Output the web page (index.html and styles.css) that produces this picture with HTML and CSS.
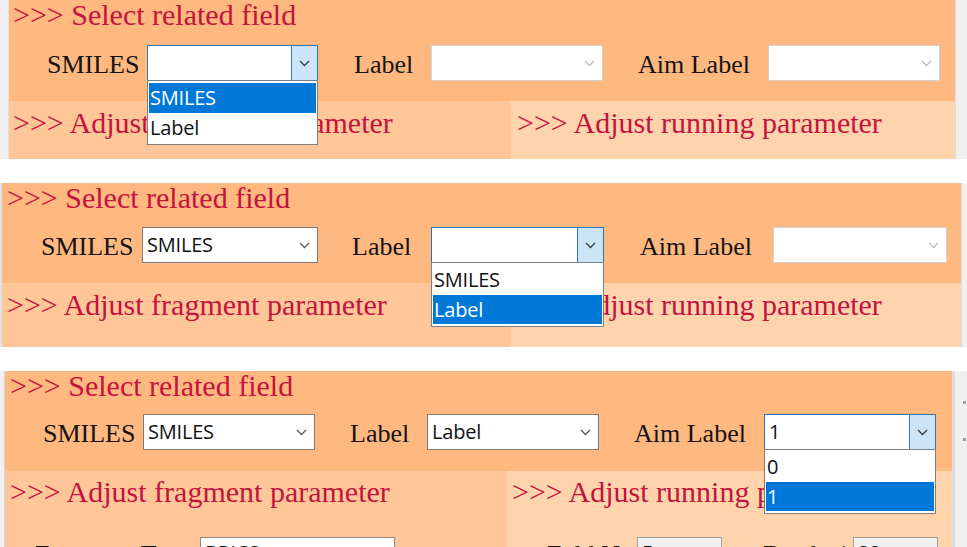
FILE: index.html
```html
<!DOCTYPE html>
<html lang="en">
<head>
<meta charset="utf-8">
<title>Select related field</title>
<link rel="stylesheet" href="styles.css">
</head>
<body>
<div class="shots">

  <!-- Shot 1: SMILES dropdown open -->
  <section class="shot shot-1">
    <div class="edge edge-left"></div>
    <div class="app">
      <div class="select-area">
        <h2 class="title">&gt;&gt;&gt; Select related field</h2>
        <div class="fields">
          <div class="field f1">
            <span class="field-label">SMILES</span>
            <div class="combo is-open">
              <span class="combo-value"></span>
              <span class="combo-btn"><svg viewBox="0 0 11 7" width="11" height="7"><path d="M1 1 L5.5 5.5 L10 1"/></svg></span>
              <ul class="listbox">
                <li class="is-active">SMILES</li>
                <li>Label</li>
              </ul>
            </div>
          </div>
          <div class="field f2">
            <span class="field-label">Label</span>
            <div class="combo is-disabled">
              <span class="combo-value"></span>
              <span class="combo-btn"><svg viewBox="0 0 11 7" width="11" height="7"><path d="M1 1 L5.5 5.5 L10 1"/></svg></span>
            </div>
          </div>
          <div class="field f3">
            <span class="field-label">Aim Label</span>
            <div class="combo is-disabled">
              <span class="combo-value"></span>
              <span class="combo-btn"><svg viewBox="0 0 11 7" width="11" height="7"><path d="M1 1 L5.5 5.5 L10 1"/></svg></span>
            </div>
          </div>
        </div>
      </div>
      <div class="param-area">
        <div class="param-col param-fragment"><h2 class="title">&gt;&gt;&gt; Adjust fragment parameter</h2></div>
        <div class="param-col param-running"><h2 class="title">&gt;&gt;&gt; Adjust running parameter</h2></div>
      </div>
    </div>
    <div class="edge edge-right"></div>
  </section>

  <!-- Shot 2: Label dropdown open -->
  <section class="shot shot-2">
    <div class="edge edge-left"></div>
    <div class="app">
      <div class="select-area">
        <h2 class="title">&gt;&gt;&gt; Select related field</h2>
        <div class="fields">
          <div class="field f1">
            <span class="field-label">SMILES</span>
            <div class="combo">
              <span class="combo-value">SMILES</span>
              <span class="combo-btn"><svg viewBox="0 0 11 7" width="11" height="7"><path d="M1 1 L5.5 5.5 L10 1"/></svg></span>
            </div>
          </div>
          <div class="field f2">
            <span class="field-label">Label</span>
            <div class="combo is-open">
              <span class="combo-value"></span>
              <span class="combo-btn"><svg viewBox="0 0 11 7" width="11" height="7"><path d="M1 1 L5.5 5.5 L10 1"/></svg></span>
              <ul class="listbox">
                <li>SMILES</li>
                <li class="is-active">Label</li>
              </ul>
            </div>
          </div>
          <div class="field f3">
            <span class="field-label">Aim Label</span>
            <div class="combo is-disabled">
              <span class="combo-value"></span>
              <span class="combo-btn"><svg viewBox="0 0 11 7" width="11" height="7"><path d="M1 1 L5.5 5.5 L10 1"/></svg></span>
            </div>
          </div>
        </div>
      </div>
      <div class="param-area">
        <div class="param-col param-fragment"><h2 class="title">&gt;&gt;&gt; Adjust fragment parameter</h2></div>
        <div class="param-col param-running"><h2 class="title">&gt;&gt;&gt; Adjust running parameter</h2></div>
      </div>
    </div>
    <div class="edge edge-right"></div>
  </section>

  <!-- Shot 3: Aim Label dropdown open -->
  <section class="shot shot-3">
    <div class="edge edge-left"></div>
    <div class="app">
      <div class="select-area">
        <h2 class="title">&gt;&gt;&gt; Select related field</h2>
        <div class="fields">
          <div class="field f1">
            <span class="field-label">SMILES</span>
            <div class="combo">
              <span class="combo-value">SMILES</span>
              <span class="combo-btn"><svg viewBox="0 0 11 7" width="11" height="7"><path d="M1 1 L5.5 5.5 L10 1"/></svg></span>
            </div>
          </div>
          <div class="field f2">
            <span class="field-label">Label</span>
            <div class="combo">
              <span class="combo-value">Label</span>
              <span class="combo-btn"><svg viewBox="0 0 11 7" width="11" height="7"><path d="M1 1 L5.5 5.5 L10 1"/></svg></span>
            </div>
          </div>
          <div class="field f3">
            <span class="field-label">Aim Label</span>
            <div class="combo is-open">
              <span class="combo-value">1</span>
              <span class="combo-btn"><svg viewBox="0 0 11 7" width="11" height="7"><path d="M1 1 L5.5 5.5 L10 1"/></svg></span>
              <ul class="listbox">
                <li>0</li>
                <li class="is-active">1</li>
              </ul>
            </div>
          </div>
        </div>
      </div>
      <div class="param-area">
        <div class="param-col param-fragment">
          <h2 class="title">&gt;&gt;&gt; Adjust fragment parameter</h2>
          <div class="param-row">
            <span class="param-label">Fragment Type</span>
            <span class="param-input">BRICS</span>
          </div>
        </div>
        <div class="param-col param-running">
          <h2 class="title">&gt;&gt;&gt; Adjust running parameter</h2>
          <div class="param-row">
            <span class="param-label">Fold Num</span>
            <span class="param-input is-readonly">5</span>
            <span class="param-label">Batch size</span>
            <span class="param-input is-readonly">32</span>
          </div>
        </div>
      </div>
    </div>
    <div class="edge edge-right"><span class="scroll-mark"></span><span class="scroll-mark"></span></div>
  </section>

</div>
</body>
</html>
```

FILE: styles.css
```css
* { box-sizing: border-box; }

html, body {
  margin: 0;
  padding: 0;
  background: #ffffff;
}

body {
  width: 967px;
  height: 547px;
  overflow: hidden;
  font-family: "Liberation Serif", "Times New Roman", serif;
}

.shots {
  display: flex;
  flex-direction: column;
  gap: 24px;
}

/* ---------- one screenshot ---------- */
.shot {
  display: flex;
  overflow: hidden;
}
.shot-1 { height: 159px; }
.shot-2 { height: 164px; }
.shot-3 { height: 176px; }

.edge {
  flex: none;
  background: #f0f0f0;
}
.shot-1 .edge-left { width: 9px; border-right: 1px solid #e2e2e2; }
.shot-2 .edge-left { width: 2px; background: #dfe3e8; }
.shot-3 .edge-left { width: 5px; border-right: 1px solid #d6d6d6; }

.edge-right { flex: 1; border-left: 1px solid #dadada; }
.shot-3 .edge-right {
  border-left: 3px solid #dcdcdc;
  display: flex;
  flex-direction: column;
  align-items: flex-end;
  padding-top: 30px;
  gap: 34px;
}
.scroll-mark {
  width: 3px;
  height: 3px;
  background: #a0a0a0;
  margin-right: 1px;
}

.app {
  flex: none;
  display: flex;
  flex-direction: column;
}
.shot-1 .app { width: 946px; }
.shot-2 .app { width: 959px; }
.shot-3 .app { width: 947px; }

.title {
  margin: 0;
  font-weight: normal;
  font-size: 30px;
  line-height: 30px;
  color: #c4133d;
  white-space: nowrap;
}

/* ---------- select area ---------- */
.select-area {
  height: 100px;
  flex: none;
  background: #ffb880;
}
.shot-1 .select-area { height: 101px; }
.shot-1 .select-area .title { padding-left: 4px; }
.shot-2 .select-area .title { padding-left: 5px; }
.shot-3 .select-area .title { padding-left: 5px; }

.fields {
  display: flex;
  align-items: center;
  margin-top: 15px;
}
.shot-1 .fields { padding-left: 38px; }
.shot-2 .fields { padding-left: 39px; margin-top: 14px; }
.shot-3 .fields { padding-left: 38px; margin-top: 13px; }

.field {
  display: flex;
  align-items: center;
}
.field-label {
  flex: none;
  font-size: 26px;
  line-height: 30px;
  padding-top: 4px;
  color: #141414;
  white-space: nowrap;
}

/* per-shot column geometry */
.shot-1 .f1 .field-label { width: 100px; }
.shot-1 .f2 { margin-left: 36px; }
.shot-1 .f2 .field-label { width: 77px; }
.shot-1 .f3 { margin-left: 35px; }
.shot-1 .f3 .field-label { width: 130px; }
.shot-1 .f1 .combo { width: 171px; }
.shot-1 .f2 .combo, .shot-1 .f3 .combo { width: 172px; }

.shot-2 .f1 .field-label { width: 101px; }
.shot-2 .f2 { margin-left: 34px; }
.shot-2 .f2 .field-label { width: 79px; }
.shot-2 .f3 { margin-left: 36px; }
.shot-2 .f3 .field-label { width: 133px; }
.shot-2 .f1 .combo { width: 176px; }
.shot-2 .f2 .combo { width: 173px; }
.shot-2 .f3 .combo { width: 174px; }

.shot-3 .f1 .field-label { width: 100px; }
.shot-3 .f2 { margin-left: 35px; }
.shot-3 .f2 .field-label { width: 77px; }
.shot-3 .f3 { margin-left: 35px; }
.shot-3 .f3 .field-label { width: 130px; }
.shot-3 .combo { width: 172px; }

/* ---------- combo box ---------- */
.combo {
  position: relative;
  flex: none;
  height: 36px;
  display: flex;
  align-items: stretch;
  background: #ffffff;
  border: 1px solid #7a7a7a;
  font-family: "Open Sans", "Noto Sans", sans-serif;
  font-size: 20px;
  color: #111;
}
.combo-value {
  flex: 1;
  padding-left: 4px;
  line-height: 34px;
  white-space: nowrap;
  letter-spacing: -0.2px;
}
.combo-btn {
  flex: none;
  width: 26px;
  display: flex;
  align-items: center;
  justify-content: center;
  color: #5a5a5a;
}
.combo-btn svg {
  fill: none;
  stroke: currentColor;
  stroke-width: 1.3;
}

.combo.is-disabled {
  border-color: #d2d2d2;
}
.combo.is-disabled .combo-btn { color: #bdbdbd; }

.combo.is-open {
  border-color: #2f74b5;
}
.combo.is-open .combo-btn {
  background: #cce4f7;
  border-left: 1px solid #2f74b5;
  color: #3c3c3c;
}

.listbox {
  position: absolute;
  top: 100%;
  left: -1px;
  right: -1px;
  margin: 0;
  padding: 2px 1px;
  list-style: none;
  background: #ffffff;
  border: 1px solid #7f7f7f;
  z-index: 5;
}
.listbox li {
  height: 29.5px;
  line-height: 29px;
  padding-left: 1px;
  white-space: nowrap;
  letter-spacing: -0.2px;
  color: #111;
}
.listbox li.is-active {
  background: #0078d7;
  color: #ffffff;
}

/* ---------- parameter area ---------- */
.param-area {
  flex: 1;
  display: flex;
}
.param-col {
  padding-top: 7px;
}
.param-fragment {
  flex: none;
  background: #ffc799;
}
.param-running {
  flex: 1;
  background: #ffd4ad;
}
.shot-1 .param-fragment { width: 502px; }
.shot-2 .param-fragment { width: 509px; }
.shot-3 .param-fragment { width: 502px; }

.shot-1 .param-fragment .title { padding-left: 4px; }
.shot-1 .param-running .title { padding-left: 6px; }
.shot-2 .param-fragment .title { padding-left: 5px; }
.shot-2 .param-running .title { padding-left: 6px; }
.shot-3 .param-col { padding-top: 6px; }
.shot-3 .param-fragment .title { padding-left: 5px; }
.shot-3 .param-running .title { padding-left: 5px; }

.param-row {
  display: flex;
  align-items: flex-start;
  margin-top: 30px;
}
.param-label {
  font-size: 26px;
  line-height: 30px;
  padding-top: 3px;
  color: #141414;
  white-space: nowrap;
}
.param-fragment .param-row { padding-left: 30px; }
.param-fragment .param-label { width: 165px; }
.param-input {
  height: 32px;
  border: 1px solid #8a8a8a;
  background: #ffffff;
  font-family: "Open Sans", "Noto Sans", sans-serif;
  font-size: 20px;
  line-height: 30px;
  padding-left: 4px;
  color: #111;
}
.param-fragment .param-input { width: 195px; }
.param-running .param-row { padding-left: 40px; }
.param-running .param-label { width: 90px; }
.param-running .param-label + .param-input + .param-label { margin-left: 41px; }
.param-input.is-readonly {
  width: 85px;
  background: #f0f0f0;
  border-color: #a0a0a0;
}
```
